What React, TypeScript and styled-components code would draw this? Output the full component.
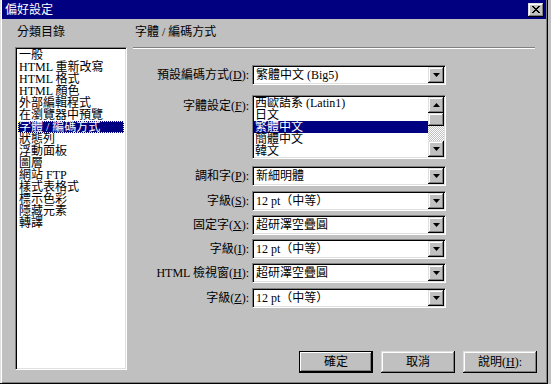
import React from "react";
import styled, { createGlobalStyle } from "styled-components";

const FONT = `"Liberation Serif", "Noto Sans CJK TC", serif`;

const GlobalStyle = createGlobalStyle`
  html, body {
    margin: 0;
    padding: 0;
    background: #c0c0c0;
  }
  body {
    width: 551px;
    height: 384px;
    overflow: hidden;
    font-family: ${FONT};
    font-size: 12px;
    color: #000;
  }
`;

const raised = `
  background: #c0c0c0;
  box-shadow: inset -1px -1px 0 #000, inset 1px 1px 0 #dfdfdf,
    inset -2px -2px 0 #808080, inset 2px 2px 0 #fff;
`;

const sunken = `
  background: #fff;
  box-sizing: border-box;
  border: 1px solid;
  border-color: #808080 #fff #fff #808080;
  box-shadow: inset 1px 1px 0 #000, inset -1px -1px 0 #dfdfdf;
`;

const Window = styled.div`
  width: 548px;
  height: 384px;
  box-sizing: border-box;
  background: #c0c0c0;
  border-right: 1px solid #000;
  border-bottom: 1px solid #000;
  box-shadow: inset 1px 0 0 #dfdfdf, inset 2px 0 0 #fff, inset -1px -1px 0 #808080;
  padding: 0 1px 2px 2px;
  display: flex;
  flex-direction: column;
`;

const TitleBar = styled.div`
  height: 19px;
  background: #000080;
  color: #fff;
  display: flex;
  align-items: center;
  justify-content: space-between;
  padding: 0 2px 0 3px;
  line-height: 12px;
`;

const CloseButton = styled.div`
  ${raised}
  width: 16px;
  height: 14px;
  display: flex;
  align-items: center;
  justify-content: center;
`;

const Content = styled.div`
  flex: 1;
  display: flex;
  gap: 6px;
  padding-left: 13px;
`;

const LeftPane = styled.div`
  width: 112px;
  display: flex;
  flex-direction: column;
`;

const RightPane = styled.div`
  width: 404px;
  display: flex;
  flex-direction: column;
`;

const Caption = styled.div`
  padding: 7px 0 0 2px;
  height: 28px;
  box-sizing: border-box;
  line-height: 12px;
  white-space: nowrap;
`;

const Rule = styled.div`
  width: 402px;
  height: 2px;
  box-sizing: border-box;
  border-top: 1px solid #808080;
  border-bottom: 1px solid #fff;
`;

const CategoryList = styled.div`
  ${sunken}
  height: 323px;
  padding: 1px 2px 2px 2px;
`;

const Item = styled.div<{ $selected?: boolean; $focus?: boolean }>`
  height: 12px;
  line-height: 12px;
  padding-left: 1px;
  white-space: nowrap;
  background: ${(p) => (p.$selected ? "#000080" : "transparent")};
  color: ${(p) => (p.$selected ? "#fff" : "#000")};
  outline: ${(p) => (p.$focus ? "1px dotted #ffff80" : "none")};
  outline-offset: -1px;
`;

const Form = styled.div`
  margin-top: 16px;
  display: flex;
  flex-direction: column;
`;

const Row = styled.div<{ $mt: number; $top?: boolean }>`
  display: flex;
  align-items: ${(p) => (p.$top ? "flex-start" : "center")};
  margin-top: ${(p) => p.$mt}px;
`;

const Label = styled.label<{ $top?: boolean }>`
  width: 116px;
  text-align: right;
  white-space: nowrap;
  line-height: 14px;
  padding-top: ${(p) => (p.$top ? 4 : 0)}px;
  u {
    text-decoration: underline;
  }
`;

const Select = styled.div`
  ${sunken}
  margin-left: 3px;
  width: 194px;
  height: 20px;
  padding: 1px;
  display: flex;
  align-items: center;
`;

const Value = styled.span`
  flex: 1;
  padding-left: 2px;
  line-height: 14px;
  white-space: nowrap;
`;

const DropButton = styled.div`
  ${raised}
  width: 16px;
  height: 16px;
  display: flex;
  align-items: center;
  justify-content: center;
`;

const ListBox = styled.div`
  ${sunken}
  margin-left: 3px;
  width: 194px;
  height: 64px;
  padding: 1px;
  display: flex;
`;

const ListItems = styled.div`
  flex: 1;
`;

const ScrollBar = styled.div`
  width: 16px;
  display: flex;
  flex-direction: column;
`;

const ScrollButton = styled.div<{ $h: number }>`
  ${raised}
  height: ${(p) => p.$h}px;
  display: flex;
  align-items: center;
  justify-content: center;
`;

const Track = styled.div`
  flex: 1;
  background: repeating-conic-gradient(#c0c0c0 0 25%, #fff 0 50%) 0 0 / 2px 2px;
`;

const ButtonRow = styled.div`
  margin-top: 43px;
  display: flex;
  justify-content: flex-end;
  gap: 8px;
`;

const Button = styled.div<{ $default?: boolean }>`
  ${raised}
  width: 74px;
  height: 22px;
  box-sizing: border-box;
  display: flex;
  align-items: center;
  justify-content: center;
  line-height: 14px;
  ${(p) =>
    p.$default &&
    `box-shadow: inset 0 0 0 1px #000, inset -2px -2px 0 #000, inset 2px 2px 0 #fff, inset -3px -3px 0 #808080;`}
`;

const Arrow = ({ up }: { up?: boolean }) => (
  <svg width="7" height="4" viewBox="0 0 7 4">
    <path d={up ? "M3.5 0 L7 4 L0 4 Z" : "M0 0 L7 0 L3.5 4 Z"} fill="#000" />
  </svg>
);

const CloseGlyph = () => (
  <svg width="8" height="7" viewBox="0 0 8 7" shapeRendering="crispEdges">
    <path
      d="M0 0h2v1h-2zM6 0h2v1h-2zM1 1h2v1h-2zM5 1h2v1h-2zM2 2h4v1h-4zM3 3h2v1h-2zM2 4h4v1h-4zM1 5h2v1h-2zM5 5h2v1h-2zM0 6h2v1h-2zM6 6h2v1h-2z"
      fill="#000"
    />
  </svg>
);

const categories = [
  "一般",
  "HTML 重新改寫",
  "HTML 格式",
  "HTML 顏色",
  "外部編輯程式",
  "在瀏覽器中預覽",
  "字體 / 編碼方式",
  "狀態列",
  "浮動面板",
  "圖層",
  "網站 FTP",
  "樣式表格式",
  "標示色彩",
  "隱藏元素",
  "轉譯",
];

const encodings = ["西歐語系 (Latin1)", "日文", "繁體中文", "簡體中文", "韓文"];

const fontRows = [
  { label: "調和字", key: "P", value: "新細明體", mt: 7 },
  { label: "字級", key: "S", value: "12 pt（中等）", mt: 5 },
  { label: "固定字", key: "X", value: "超研澤空疊圓", mt: 4 },
  { label: "字級", key: "I", value: "12 pt（中等）", mt: 4 },
  { label: "HTML 檢視窗", key: "H", value: "超研澤空疊圓", mt: 4 },
  { label: "字級", key: "Z", value: "12 pt（中等）", mt: 5 },
];

const Key = ({ k }: { k: string }) => (
  <>
    (<u>{k}</u>):
  </>
);

export default function App() {
  return (
    <>
      <GlobalStyle />
      <Window>
        <TitleBar>
          <span>偏好設定</span>
          <CloseButton>
            <CloseGlyph />
          </CloseButton>
        </TitleBar>
        <Content>
          <LeftPane>
            <Caption>分類目錄</Caption>
            <CategoryList>
              {categories.map((c, i) => (
                <Item key={c} $selected={i === 6} $focus={i === 6}>
                  {c}
                </Item>
              ))}
            </CategoryList>
          </LeftPane>
          <RightPane>
            <Caption>字體 / 編碼方式</Caption>
            <Rule />
            <Form>
              <Row $mt={0}>
                <Label>
                  預設編碼方式<Key k="D" />
                </Label>
                <Select>
                  <Value>繁體中文 (Big5)</Value>
                  <DropButton>
                    <Arrow />
                  </DropButton>
                </Select>
              </Row>
              <Row $mt={10} $top>
                <Label $top>
                  字體設定<Key k="F" />
                </Label>
                <ListBox>
                  <ListItems>
                    {encodings.map((e, i) => (
                      <Item key={e} $selected={i === 2}>
                        {e}
                      </Item>
                    ))}
                  </ListItems>
                  <ScrollBar>
                    <ScrollButton $h={16}>
                      <Arrow up />
                    </ScrollButton>
                    <ScrollButton $h={13} />
                    <Track />
                    <ScrollButton $h={16}>
                      <Arrow />
                    </ScrollButton>
                  </ScrollBar>
                </ListBox>
              </Row>
              {fontRows.map((r, i) => (
                <Row key={i} $mt={r.mt}>
                  <Label>
                    {r.label}
                    <Key k={r.key} />
                  </Label>
                  <Select>
                    <Value>{r.value}</Value>
                    <DropButton>
                      <Arrow />
                    </DropButton>
                  </Select>
                </Row>
              ))}
            </Form>
            <ButtonRow>
              <Button $default>確定</Button>
              <Button>取消</Button>
              <Button>
                說明<Key k="H" />
              </Button>
            </ButtonRow>
          </RightPane>
        </Content>
      </Window>
    </>
  );
}
